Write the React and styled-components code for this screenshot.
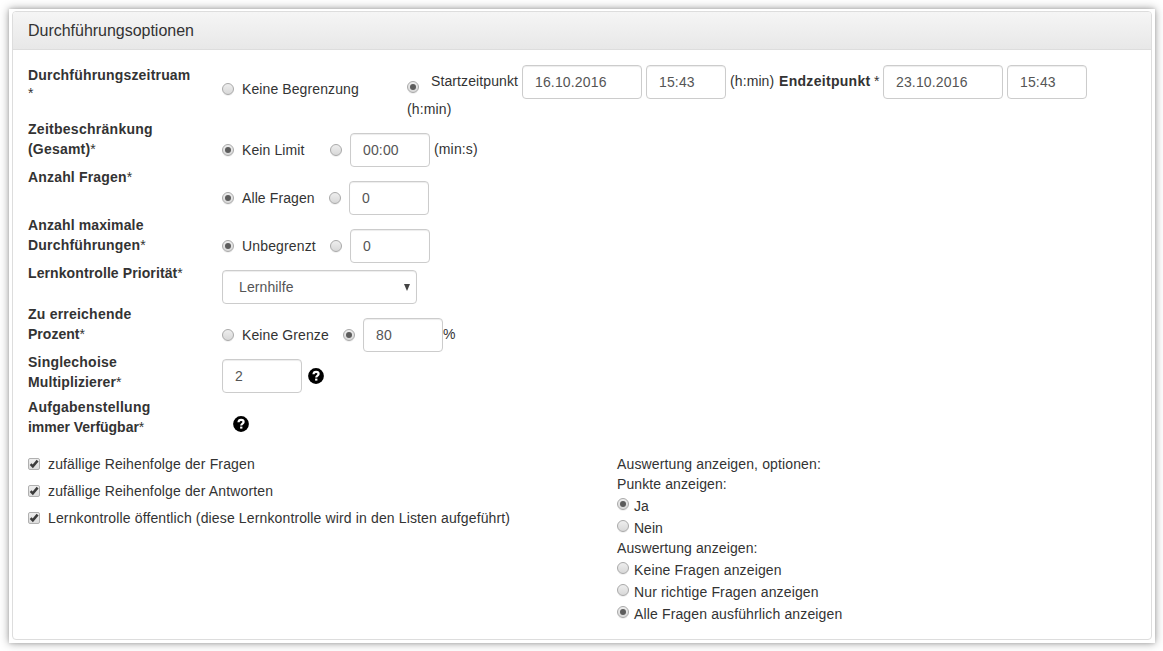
import React from "react";
import styled, { createGlobalStyle, css } from "styled-components";

const GlobalStyle = createGlobalStyle`
  *, *::before, *::after { box-sizing: border-box; }
  body {
    margin: 0;
    background: #fff;
    color: #333;
    font: 14px/20px "Liberation Sans", Arial, sans-serif;
  }
`;

const Page = styled.div`
  height: 651px;
  padding: 9px 8px 8px 9px;
  overflow: hidden;
`;

const Frame = styled.div`
  height: 634px;
  padding: 2px 3px 3px;
  background: #fff;
  box-shadow: 0 0 9px rgba(0, 0, 0, 0.38), 0 -1px 3px rgba(0, 0, 0, 0.08), 0 1px 3px rgba(0, 0, 0, 0.08);
`;

const Panel = styled.section`
  height: 629px;
  border: 1px solid #ddd;
  border-radius: 4px;
`;

const PanelHeader = styled.header`
  height: 38px;
  padding: 9px 15px;
  border-bottom: 1px solid #ddd;
  border-radius: 3px 3px 0 0;
  background: linear-gradient(#f5f5f5, #e8e8e8);
`;

const Title = styled.h3`
  margin: 0;
  font-size: 16px;
  font-weight: normal;
  line-height: 19px;
  letter-spacing: -0.02px;
`;

const PanelBody = styled.div`
  padding: 15px 15px 0;
`;

const Row = styled.div`
  display: grid;
  grid-template-columns: 194px 1fr;
  height: ${(p) => p.$h}px;
`;

const Label = styled.div`
  white-space: nowrap;
`;

const Text = styled.span`
  display: inline-block;
  flex: none;
  white-space: nowrap;
  letter-spacing: ${(p) => p.$ls ?? 0.1}px;
  ${(p) => p.$w && css`width: ${p.$w}px;`}
  ${(p) => p.$up && css`padding-bottom: ${p.$up}px;`}
`;

const Bold = styled(Text)`
  font-weight: bold;
`;

const RaisedStar = styled.div`
  line-height: 16px;
`;

const Percent = styled(Text)`
  margin-left: -4px;
  padding-bottom: 2px;
`;

const Controls = styled.div`
  display: flex;
  align-items: center;
  height: 34px;
  margin-top: ${(p) => p.$top || 0}px;
`;

const PeriodControls = styled.div`
  display: grid;
  grid-template-columns: 185px 1fr;
`;

const Radio = styled.span`
  display: inline-flex;
  align-items: center;
  justify-content: center;
  flex: none;
  width: 12px;
  height: 12px;
  margin-top: ${(p) => p.$drop || 0}px;
  margin-right: ${(p) => p.$gap ?? 8}px;
  border: 1px solid #a9a9a9;
  border-radius: 50%;
  background: linear-gradient(#eee, #d8d8d8);
  box-shadow: 0 1px 0 rgba(0, 0, 0, 0.06);

  &::after {
    content: "";
    width: 6px;
    height: 6px;
    border-radius: 50%;
    background: ${(p) => (p.$on ? "#5c5c5c" : "transparent")};
  }
`;

const Field = styled.input`
  flex: none;
  width: ${(p) => p.$w || 80}px;
  height: 34px;
  margin: 0 4px 0 0;
  padding: 6px 12px;
  border: 1px solid #ccc;
  border-radius: 4px;
  background: #fff;
  box-shadow: inset 0 1px 1px rgba(0, 0, 0, 0.075);
  color: #555;
  font: inherit;
  letter-spacing: 0.15px;
  outline: 0;
`;

const Select = styled.div`
  display: flex;
  align-items: center;
  justify-content: space-between;
  width: 195px;
  height: 34px;
  padding: 0 6px 0 16px;
  border: 1px solid #ccc;
  border-radius: 4px;
  box-shadow: inset 0 1px 1px rgba(0, 0, 0, 0.075);
  color: #555;
  letter-spacing: 0.1px;
`;

const Arrow = styled.span`
  width: 0;
  height: 0;
  border: solid transparent;
  border-width: 7px 3.5px 0;
  border-top-color: #444;
`;

const HelpSvg = styled.svg`
  display: block;
  flex: none;
  width: 16px;
  height: 16px;
  margin-left: ${(p) => p.$left}px;
`;

const Help = ({ left }) => (
  <HelpSvg $left={left} viewBox="0 0 16 16">
    <circle cx="8" cy="8" r="7.9" fill="#000" />
    <path d="M5.5 6.2C5.6 4.6 6.6 3.8 8.1 3.8c1.5 0 2.5.8 2.5 2.1C10.6 7.6 8.2 7.5 8.2 9.6" fill="none" stroke="#fff" strokeWidth="2.2" />
    <rect x="7.1" y="10.6" width="2.3" height="2" fill="#fff" />
  </HelpSvg>
);

const Options = styled.div`
  display: grid;
  grid-template-columns: 589px 1fr;
`;

const CheckRow = styled.div`
  display: flex;
  align-items: center;
  height: 20px;
  margin-bottom: 7px;
`;

const Box = styled.span`
  display: flex;
  flex: none;
  width: 12px;
  height: 12px;
  margin-right: 8px;
  border: 1px solid #b0b0b0;
  border-radius: 2px;
  background: linear-gradient(#eee, #dcdcdc);
`;

const Check = () => (
  <Box>
    <svg width="10" height="10" viewBox="0 0 10 10">
      <path d="M1.6 5.2 3.8 7.4 8.6 1.6" fill="none" stroke="#3c3c3c" strokeWidth="2.5" />
    </svg>
  </Box>
);

const RadioRow = styled.div`
  display: flex;
  align-items: flex-start;
  height: 22px;
  padding-top: 2px;

  ${Radio} { margin-top: 2px; }
`;

const Line = styled.div`
  height: 20px;
`;

export default function App() {
  return (
    <>
      <GlobalStyle />
      <Page>
        <Frame>
          <Panel>
            <PanelHeader><Title>Durchführungsoptionen</Title></PanelHeader>
            <PanelBody>
              <Row $h={54}>
                <Label><Bold $ls={0.18}>Durchführungszeitruam</Bold><RaisedStar>*</RaisedStar></Label>
                <PeriodControls>
                  <Controls $top={7}><Radio /><Text>Keine Begrenzung</Text></Controls>
                  <div>
                    <Controls>
                      <Radio $on $gap={12} $drop={10} />
                      <Text $w={91} $up={2}>Startzeitpunkt</Text>
                      <Field $w={120} defaultValue="16.10.2016" />
                      <Field defaultValue="15:43" />
                      <Text $w={49} $up={2}>(h:min)</Text>
                      <Bold $w={95} $up={2} $ls={0.3}>Endzeitpunkt</Bold>
                      <Text $w={9} $up={2}>*</Text>
                      <Field $w={120} defaultValue="23.10.2016" />
                      <Field defaultValue="15:43" />
                    </Controls>
                    <Text $ls={0.15}>(h:min)</Text>
                  </div>
                </PeriodControls>
              </Row>
              <Row $h={48}>
                <Label><Bold $ls={0.27}>Zeitbeschränkung</Bold><br /><Bold $ls={0.2}>(Gesamt)</Bold>*</Label>
                <Controls $top={14}>
                  <Radio $on /><Text $w={88}>Kein Limit</Text>
                  <Radio /><Field defaultValue="00:00" /><Text $up={2} $ls={0.15}>(min:s)</Text>
                </Controls>
              </Row>
              <Row $h={48}>
                <Label><Bold $ls={0.17}>Anzahl Fragen</Bold>*</Label>
                <Controls $top={14}>
                  <Radio $on /><Text $w={87}>Alle Fragen</Text>
                  <Radio /><Field defaultValue="0" />
                </Controls>
              </Row>
              <Row $h={48}>
                <Label><Bold $ls={0.13}>Anzahl maximale</Bold><br /><Bold $ls={0.19}>Durchführungen</Bold>*</Label>
                <Controls $top={14}>
                  <Radio $on /><Text $w={88} $ls={0.15}>Unbegrenzt</Text>
                  <Radio /><Field defaultValue="0" />
                </Controls>
              </Row>
              <Row $h={41}>
                <Label><Bold $ls={0.1}>Lernkontrolle Priorität</Bold>*</Label>
                <Controls $top={7}><Select>Lernhilfe<Arrow /></Select></Controls>
              </Row>
              <Row $h={48}>
                <Label><Bold $ls={0.22}>Zu erreichende</Bold><br /><Bold $ls={0.02}>Prozent</Bold>*</Label>
                <Controls $top={14}>
                  <Radio /><Text $w={101}>Keine Grenze</Text>
                  <Radio $on /><Field defaultValue="80" /><Percent>%</Percent>
                </Controls>
              </Row>
              <Row $h={45}>
                <Label><Bold $ls={0.22}>Singlechoise</Bold><br /><Bold $ls={0.12}>Multiplizierer</Bold>*</Label>
                <Controls $top={7}><Field defaultValue="2" /><Help left={2} /></Controls>
              </Row>
              <Row $h={57}>
                <Label><Bold $ls={0.27}>Aufgabenstellung</Bold><br /><Bold $ls={-0.03}>immer Verfügbar</Bold>*</Label>
                <Controls $top={10}><Help left={11} /></Controls>
              </Row>
              <Options>
                <div>
                  <CheckRow><Check /><Text $ls={0.14}>zufällige Reihenfolge der Fragen</Text></CheckRow>
                  <CheckRow><Check /><Text $ls={0.14}>zufällige Reihenfolge der Antworten</Text></CheckRow>
                  <CheckRow><Check /><Text $ls={0.135}>Lernkontrolle öffentlich (diese Lernkontrolle wird in den Listen aufgeführt)</Text></CheckRow>
                </div>
                <div>
                  <Line><Text $ls={0.13}>Auswertung anzeigen, optionen:</Text></Line>
                  <Line><Text>Punkte anzeigen:</Text></Line>
                  <RadioRow><Radio $on $gap={5} /><Text>Ja</Text></RadioRow>
                  <RadioRow><Radio $gap={5} /><Text $ls={0}>Nein</Text></RadioRow>
                  <Line><Text>Auswertung anzeigen:</Text></Line>
                  <RadioRow><Radio $gap={5} /><Text $ls={0.14}>Keine Fragen anzeigen</Text></RadioRow>
                  <RadioRow><Radio $gap={5} /><Text $ls={0.15}>Nur richtige Fragen anzeigen</Text></RadioRow>
                  <RadioRow><Radio $on $gap={5} /><Text $ls={0.14}>Alle Fragen ausführlich anzeigen</Text></RadioRow>
                </div>
              </Options>
            </PanelBody>
          </Panel>
        </Frame>
      </Page>
    </>
  );
}
